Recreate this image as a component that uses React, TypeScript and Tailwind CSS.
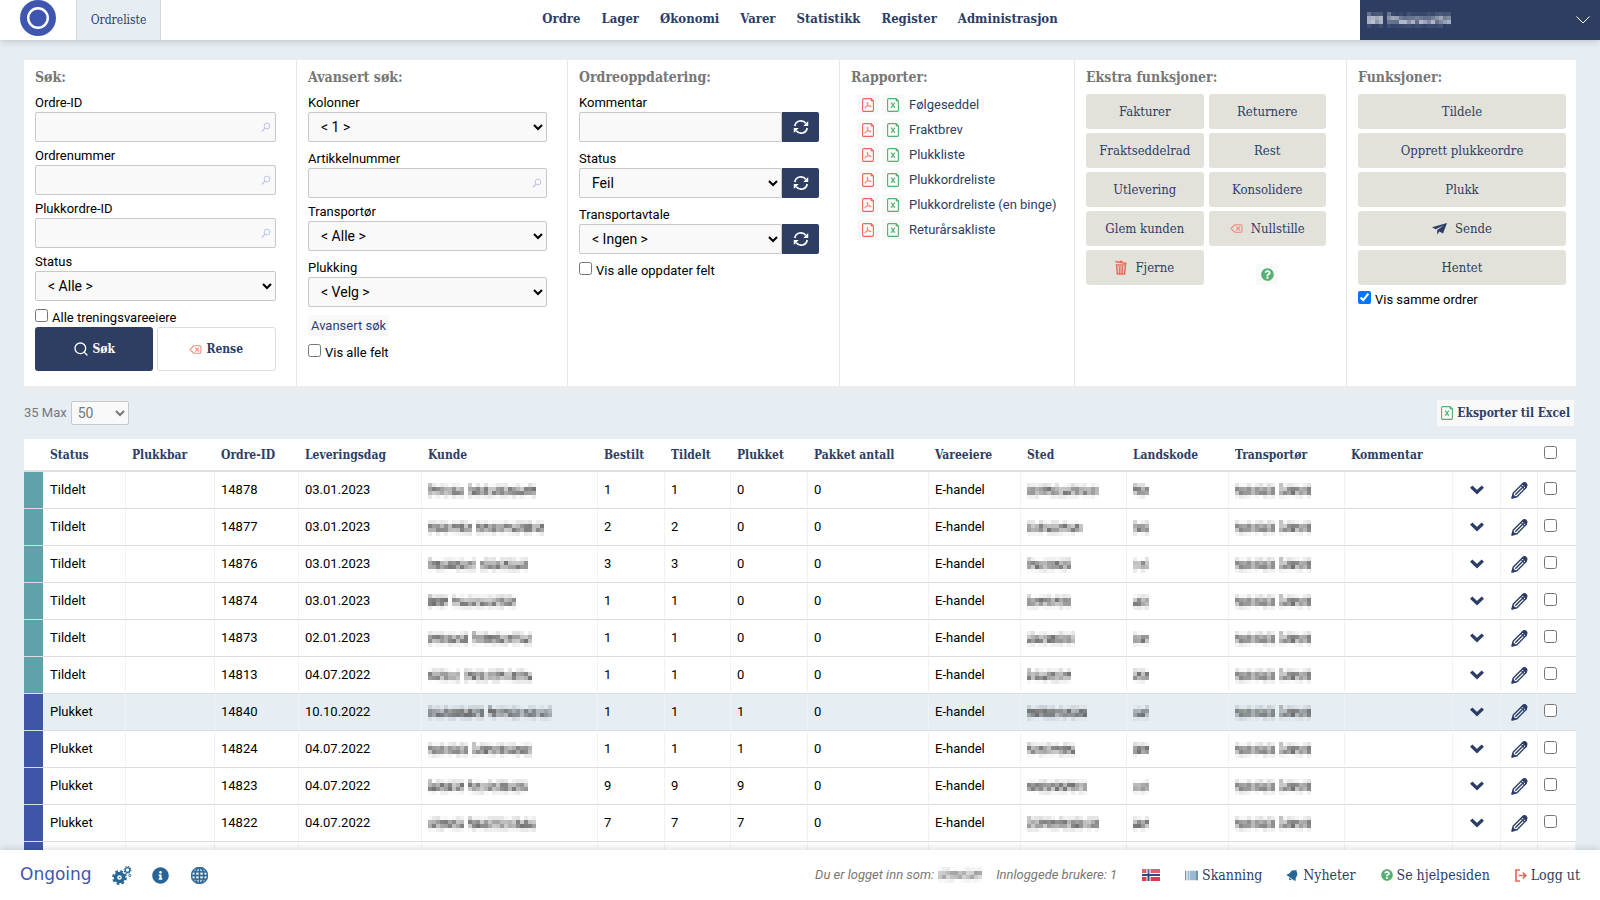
import type { ReactNode } from "react";
import { Delete, Search } from "lucide-react";
import { FaBarcode, FaBell, FaInfoCircle, FaQuestionCircle } from "react-icons/fa";
import { BsGlobe } from "react-icons/bs";

const slab = "font-['DejaVu_Serif_Condensed','DejaVu_Serif',serif]";

const menu = ["Ordre", "Lager", "Økonomi", "Varer", "Statistikk", "Register", "Administrasjon"];

const reports = [
  "Følgeseddel",
  "Fraktbrev",
  "Plukkliste",
  "Plukkordreliste",
  "Plukkordreliste (en binge)",
  "Returårsakliste",
];

const columns = [
  { label: "", width: 20 },
  { label: "Status", width: 82 },
  { label: "Plukkbar", width: 89 },
  { label: "Ordre-ID", width: 84 },
  { label: "Leveringsdag", width: 123 },
  { label: "Kunde", width: 176 },
  { label: "Bestilt", width: 67 },
  { label: "Tildelt", width: 66 },
  { label: "Plukket", width: 77 },
  { label: "Pakket antall", width: 121 },
  { label: "Vareeiere", width: 92 },
  { label: "Sted", width: 106 },
  { label: "Landskode", width: 102 },
  { label: "Transportør", width: 116 },
  { label: "Kommentar", width: 108 },
  { label: "", width: 48 },
  { label: "", width: 37 },
  { label: "", width: 38 },
];

// kunde and sted hold the lengths of the masked words, in mosaic cells
const orders = [
  { id: "14878", status: "Tildelt", date: "03.01.2023", ordered: 1, allocated: 1, picked: 0, kunde: [9, 17], sted: [18] },
  { id: "14877", status: "Tildelt", date: "03.01.2023", ordered: 2, allocated: 2, picked: 0, kunde: [11, 17], sted: [14] },
  { id: "14876", status: "Tildelt", date: "03.01.2023", ordered: 3, allocated: 3, picked: 0, kunde: [12, 12], sted: [11] },
  { id: "14874", status: "Tildelt", date: "03.01.2023", ordered: 1, allocated: 1, picked: 0, kunde: [5, 16], sted: [11] },
  { id: "14873", status: "Tildelt", date: "02.01.2023", ordered: 1, allocated: 1, picked: 0, kunde: [10, 15], sted: [12] },
  { id: "14813", status: "Tildelt", date: "04.07.2022", ordered: 1, allocated: 1, picked: 0, kunde: [8, 17], sted: [11] },
  { id: "14840", status: "Plukket", date: "10.10.2022", ordered: 1, allocated: 1, picked: 1, kunde: [14, 16], sted: [15] },
  { id: "14824", status: "Plukket", date: "04.07.2022", ordered: 1, allocated: 1, picked: 1, kunde: [10, 15], sted: [12] },
  { id: "14823", status: "Plukket", date: "04.07.2022", ordered: 9, allocated: 9, picked: 9, kunde: [9, 15], sted: [15] },
  { id: "14822", status: "Plukket", date: "04.07.2022", ordered: 7, allocated: 7, picked: 7, kunde: [9, 17], sted: [18] },
];

function Masked({ words, seed, color = "#3a3a3a" }: { words: number[]; seed: number; color?: string }) {
  const cells: ReactNode[] = [];
  let x = 0;
  words.forEach((len, w) => {
    for (let i = 0; i < len; i++) {
      for (let row = 0; row < 4; row++) {
        const noise = Math.abs(Math.sin((seed + 1) * 12.9 + (x + i) * 78.2 + row * 37.7) * 43758.5) % 1;
        const strength = row === 0 ? (i === 0 ? 0.4 : 0.16) : row === 3 ? 0.12 : 0.45;
        const base = row === 1 || row === 2 ? 0.26 : 0;
        cells.push(
          <rect key={`${w}-${i}-${row}`} x={(x + i) * 4} y={row * 4} width={4} height={4} fill={color} opacity={base + noise * strength} />
        );
      }
    }
    x += len + 1;
  });
  const width = (x - 1) * 4;
  return (
    <svg width={width} height={16} viewBox={`0 0 ${width} 16`} className="inline-block shrink-0 align-middle" shapeRendering="crispEdges" aria-hidden="true">
      {cells}
    </svg>
  );
}

function PdfIcon() {
  return (
    <svg width="12" height="14" viewBox="0 0 12 14" fill="none" stroke="#f0655a" aria-hidden="true">
      <path d="M1.8.6H9l2.4 2.4v9.2a1.2 1.2 0 0 1-1.2 1.2H1.8A1.2 1.2 0 0 1 .6 12.2V1.8A1.2 1.2 0 0 1 1.8.6Z" strokeWidth="1.1" />
      <path d="M9 .6V3h2.4Z" fill="#f0655a" strokeWidth=".6" />
      <path d="M5.3 4.2c1 0 .5 2-.2 3.4C4.4 9 3.5 10.3 2.900 10c-.8-.5 1.2-1.7 3-2 1.6-.3 3.3-.2 3.3.4 0 .7-1.7.2-2.800-1-1-1.1-1.7-3.2-1.100-3.2Z" strokeWidth=".7" />
    </svg>
  );
}

function ExcelIcon() {
  return (
    <svg width="12" height="14" viewBox="0 0 12 14" fill="none" stroke="#55b071" aria-hidden="true">
      <path d="M1.8.6H9l2.4 2.4v9.2a1.2 1.2 0 0 1-1.2 1.2H1.8A1.2 1.2 0 0 1 .6 12.2V1.8A1.2 1.2 0 0 1 1.8.6Z" strokeWidth="1.1" />
      <path d="M9 .6V3h2.4Z" fill="#55b071" strokeWidth=".6" />
      <path d="m4.4 5 3.200 4.400M7.600 5 4.400 9.400" strokeWidth="1.200" />
      <path d="M3.800 5h1.400M6.800 5h1.400M3.800 9.400h1.400M6.800 9.400h1.400" strokeWidth=".7" />
    </svg>
  );
}

function LookupIcon() {
  return (
    <svg width="10" height="10" viewBox="0 0 10 10" fill="none" stroke="#bcc6e0" className="absolute top-[10px] right-[5px]" aria-hidden="true">
      <circle cx="6" cy="4" r="2.900" />
      <path d="M4 6.200.8 9.400" strokeWidth="1.300" />
    </svg>
  );
}

function SyncIcon() {
  return (
    <svg width="16" height="16" viewBox="0 0 16 16" fill="none" stroke="#fff" strokeWidth="1.700" aria-hidden="true">
      <path d="M1.800 7A6.200 6.200 0 0 1 12.800 4.200M14.200 9A6.200 6.200 0 0 1 3.200 11.800" />
      <path d="M15.200 2v5h-5ZM.8 14V9h5Z" fill="#fff" stroke="none" />
    </svg>
  );
}

function TrashIcon() {
  return (
    <svg width="12" height="15" viewBox="0 0 12 15" fill="none" stroke="#f0655a" aria-hidden="true">
      <path d="M.4 1.500 11.600 3.500M5 1.200l2.600.5M.8 4.800h10.400" strokeWidth="1.300" />
      <path d="m1.600 5 .8 9h7.200l.8-9" strokeWidth="1.500" />
      <path d="m4.200 5.500.3 8M6 5.500v8M7.800 5.500l-.3 8" strokeWidth="1.100" />
    </svg>
  );
}

function PlaneIcon() {
  return (
    <svg width="15" height="12" viewBox="0 0 15 12" fill="#2d3e66" aria-hidden="true">
      <path d="M15 0 0 4.200l3.600 2L12 2.200 5.200 7v4.600L7.400 8.600l3.600 2Z" />
    </svg>
  );
}

function ExpandIcon() {
  return (
    <svg width="14" height="10" viewBox="0 0 14 10" fill="none" stroke="#2d3e66" strokeWidth="3.400" aria-hidden="true">
      <path d="m1.200 1.600 5.800 5.600 5.800-5.600" />
    </svg>
  );
}

function PencilIcon() {
  return (
    <svg width="17" height="17" viewBox="0 0 17 17" fill="none" stroke="#2d3e66" aria-hidden="true">
      <path d="M1 16 2.300 11 11.600 1.800 15.200 5.400 6 14.700Z" strokeWidth="1.400" strokeLinejoin="round" />
      <path d="M11.800 1.600c1.200-1.200 2.200-1.200 3.200-.2s1.200 2 .2 3.400Z" fill="#2d3e66" strokeWidth="1.400" />
      <path d="m4.300 12.700 8.500-8.500" strokeWidth="1.500" />
      <path d="m10 3.400 3.600 3.600" strokeWidth="1.100" />
      <path d="M1 16l1-3.400 2.400 2.400Z" fill="#2d3e66" />
    </svg>
  );
}

function GearsIcon() {
  return (
    <svg width="20" height="19" viewBox="0 0 20 19" fill="none" stroke="#276596" aria-hidden="true">
      <circle cx="7.500" cy="11.500" r="4" strokeWidth="3.400" />
      <circle cx="7.500" cy="11.500" r="6.300" strokeWidth="2.200" strokeDasharray="2.600 2.350" />
      <circle cx="7.500" cy="11.500" r=".8" fill="#276596" stroke="none" />
      <circle cx="15.500" cy="4" r="2.300" strokeWidth="1.300" />
      <circle cx="15.500" cy="4" r="3.400" strokeWidth="1.100" strokeDasharray="1.400 1.270" />
      <circle cx="17.800" cy="9.400" r="1.100" strokeWidth=".9" />
    </svg>
  );
}

function LogoutIcon() {
  return (
    <svg width="12" height="13" viewBox="0 0 12 13" fill="none" stroke="#f0655a" strokeWidth="1.700" aria-hidden="true">
      <path d="M5 1H1v11h4M3.600 6.500h7M7.800 3.500l3 3-3 3" />
    </svg>
  );
}

function NorwayFlag() {
  return (
    <svg width="18" height="12" viewBox="0 0 18 12" role="img" aria-label="Norsk">
      <rect width="18" height="12" fill="#de3c4b" />
      <path d="M0 6h18M6.500 0v12" stroke="#fff" strokeWidth="4" />
      <path d="M0 6h18M6.500 0v12" stroke="#2e4a86" strokeWidth="2" />
      <rect width="18" height="5" fill="#fff" opacity=".18" />
    </svg>
  );
}

const fieldBox = "h-[30px] w-full rounded-[2px] border border-[#c8c8c8] bg-[#f9f9f9] text-sm text-black";
const fieldLabel = "block h-[18px] leading-[18px]";

function TextField({ id, label }: { id: string; label: string }) {
  return (
    <div className="mb-[5px]">
      <label htmlFor={id} className={fieldLabel}>{label}</label>
      <div className="relative">
        <input id={id} type="text" className={`${fieldBox} pr-6 pl-2`} />
        <LookupIcon />
      </div>
    </div>
  );
}

function SelectField({ id, label, value }: { id: string; label: string; value: string }) {
  return (
    <div className="mb-2">
      <label htmlFor={id} className={fieldLabel}>{label}</label>
      <select id={id} className={`${fieldBox} pl-2`}>
        <option>{value}</option>
      </select>
    </div>
  );
}

function UpdateField({ id, label, value }: { id: string; label: string; value?: string }) {
  return (
    <div className="mb-2">
      <label htmlFor={id} className={fieldLabel}>{label}</label>
      <div className="flex">
        {value ? (
          <select id={id} className={`${fieldBox} min-w-0 flex-1 pl-2`}>
            <option>{value}</option>
          </select>
        ) : (
          <input id={id} type="text" className={`${fieldBox} min-w-0 flex-1 px-2`} />
        )}
        <button type="button" aria-label={`Oppdater ${label.toLowerCase()}`} className="flex h-[30px] w-[37px] shrink-0 items-center justify-center rounded-r-[2px] bg-[#2d3e62]">
          <SyncIcon />
        </button>
      </div>
    </div>
  );
}

function Check({ id, label, checked }: { id: string; label: string; checked?: boolean }) {
  return (
    <div className="flex h-[18px] items-start gap-1">
      <input id={id} type="checkbox" defaultChecked={checked} className="size-[13px]" />
      <label htmlFor={id} className="leading-[18px]">{label}</label>
    </div>
  );
}

function Panel({ title, children, last }: { title: string; children: ReactNode; last?: boolean }) {
  return (
    <section className={last ? "min-w-0 pt-2 pr-[10px] pl-[11px]" : "min-w-0 border-r border-[#e8e8e8] pt-2 pr-5 pl-[11px]"}>
      <h2 className={`${slab} h-[26px] text-sm leading-[18px] font-bold whitespace-nowrap text-[#777]`}>{title}</h2>
      {children}
    </section>
  );
}

function FnButton({ children }: { children: ReactNode }) {
  return (
    <button type="button" className={`${slab} flex h-[35px] w-full items-center justify-center gap-2 rounded-[3px] bg-[#e2e2da] text-[13px] whitespace-nowrap text-[#2d3e66]`}>
      {children}
    </button>
  );
}

function Header() {
  return (
    <header className="relative z-10 flex h-10 shrink-0 bg-white shadow-[0_1px_8px_rgba(0,0,0,0.2)]">
      <div className="flex flex-1">
        <a href="#" aria-label="Ongoing" className="ml-5">
          <svg width="36" height="36" viewBox="0 0 36 36">
            <circle cx="18" cy="18" r="18" fill="#3f56b0" />
            <circle cx="18" cy="18" r="9.800" fill="none" stroke="#fff" strokeWidth="2.400" />
          </svg>
        </a>
        <a href="#" className={`${slab} ml-5 flex w-[85px] items-center justify-center border-x border-[#d4d9de] bg-[#e6eef4] text-xs text-[#2d3e66]`}>
          Ordreliste
        </a>
      </div>
      <nav className={`${slab} flex items-center gap-[21px] pb-0.5 text-[13px] font-bold text-[#2d3e66]`}>
        {menu.map((m) => (
          <a key={m} href="#">{m}</a>
        ))}
      </nav>
      <div className="flex flex-1 justify-end">
        <div className="relative w-60 bg-[#2d3e62]">
          <select aria-label="Vareeier" className="h-full w-full appearance-none bg-transparent" />
          <div className="pointer-events-none absolute inset-0 flex items-center justify-between pr-[10px] pl-[7px]">
            <Masked words={[4, 16]} seed={3} color="#f4f6fa" />
            <svg width="14" height="8" viewBox="0 0 14 8" fill="none" stroke="#fff">
              <path d="m.5.5 6.500 6.500L13.500.5" />
            </svg>
          </div>
        </div>
      </div>
    </header>
  );
}

function SearchPanels() {
  return (
    <div className="grid min-h-[326px] grid-cols-[273fr_271fr_272fr_235fr_272fr_229fr] bg-white text-[13px] shadow-[0_6px_0_#ececec]">
      <Panel title="Søk:">
        <TextField id="ordre-id" label="Ordre-ID" />
        <TextField id="ordrenummer" label="Ordrenummer" />
        <TextField id="plukkordre-id" label="Plukkordre-ID" />
        <SelectField id="sok-status" label="Status" value="< Alle >" />
        <Check id="trening" label="Alle treningsvareeiere" />
        <div className={`${slab} flex gap-1 text-xs font-bold`}>
          <button type="button" className="flex h-11 flex-1 items-center justify-center gap-1 rounded-[3px] bg-[#2d3e62] text-white">
            <Search className="size-4" />
            Søk
          </button>
          <button type="button" className="flex h-11 flex-1 items-center justify-center gap-1 rounded-[3px] border border-[#ddd] text-[#2d3e66]">
            <Delete className="size-[13px] text-[#f5877e]" />
            Rense
          </button>
        </div>
      </Panel>

      <Panel title="Avansert søk:">
        <SelectField id="kolonner" label="Kolonner" value="< 1 >" />
        <TextField id="artikkelnummer" label="Artikkelnummer" />
        <SelectField id="transportor" label="Transportør" value="< Alle >" />
        <SelectField id="plukking" label="Plukking" value="< Velg >" />
        <button type="button" className="mb-2 block h-[21px] bg-[#f9f9f9] px-[3px] text-[#2d3e77]">Avansert søk</button>
        <Check id="alle-felt" label="Vis alle felt" />
      </Panel>

      <Panel title="Ordreoppdatering:">
        <UpdateField id="kommentar" label="Kommentar" />
        <UpdateField id="ny-status" label="Status" value="Feil" />
        <UpdateField id="transportavtale" label="Transportavtale" value="< Ingen >" />
        <Check id="oppdater-felt" label="Vis alle oppdater felt" />
      </Panel>

      <Panel title="Rapporter:">
        <ul>
          {reports.map((r) => (
            <li key={r} className="mb-1 flex h-[21px] items-center gap-[3px] pl-1.5">
              <button type="button" aria-label={`${r} PDF`} className="flex h-[21px] w-[22px] shrink-0 items-center justify-center bg-[#f9f9f9]">
                <PdfIcon />
              </button>
              <button type="button" aria-label={`${r} Excel`} className="flex h-[21px] w-[22px] shrink-0 items-center justify-center bg-[#f9f9f9]">
                <ExcelIcon />
              </button>
              <a href="#" className="pl-0.5 whitespace-nowrap text-[#2d3e66]">{r}</a>
            </li>
          ))}
        </ul>
      </Panel>

      <Panel title="Ekstra funksjoner:">
        <div className="grid grid-cols-2 gap-x-[5px] gap-y-1">
          <FnButton>Fakturer</FnButton>
          <FnButton>Returnere</FnButton>
          <FnButton>Fraktseddelrad</FnButton>
          <FnButton>Rest</FnButton>
          <FnButton>Utlevering</FnButton>
          <FnButton>Konsolidere</FnButton>
          <FnButton>Glem kunden</FnButton>
          <FnButton>
            <Delete className="size-[13px] text-[#f5877e]" />
            Nullstille
          </FnButton>
          <FnButton>
            <TrashIcon />
            Fjerne
          </FnButton>
          <div className="flex items-end justify-center">
            <button type="button" aria-label="Hjelp" className="flex h-[21px] w-[22px] items-center justify-center bg-[#f9f9f9] text-[#55b071]">
              <FaQuestionCircle className="size-[13px]" />
            </button>
          </div>
        </div>
      </Panel>

      <Panel title="Funksjoner:" last>
        <div className="mb-1.5 flex flex-col gap-1">
          <FnButton>Tildele</FnButton>
          <FnButton>Opprett plukkeordre</FnButton>
          <FnButton>Plukk</FnButton>
          <FnButton>
            <PlaneIcon />
            Sende
          </FnButton>
          <FnButton>Hentet</FnButton>
        </div>
        <Check id="samme-ordrer" label="Vis samme ordrer" checked />
      </Panel>
    </div>
  );
}

const cell = "border-r border-[#f2f2f2] pl-1.5 text-left";

function OrderTable() {
  return (
    <table className="w-full table-fixed border-separate border-spacing-0 bg-white text-[13px] text-black">
      <colgroup>
        {columns.map((c, i) => (
          <col key={i} style={{ width: c.width }} />
        ))}
      </colgroup>
      <thead className={`${slab} text-xs text-[#2d3e66]`}>
        <tr className="h-[33px]">
          {columns.map((c, i) => (
            <th key={i} className="border-b-2 border-[#dfe0e1] pl-1.5 text-left font-bold whitespace-nowrap">
              {i === columns.length - 1 ? <input type="checkbox" aria-label="Velg alle" className="mb-1 block size-[13px]" /> : c.label}
            </th>
          ))}
        </tr>
      </thead>
      <tbody className="[&_td]:border-b [&_td]:border-b-[#dcdddf]">
        {orders.map((o, i) => (
          <tr key={o.id} className={o.id === "14840" ? "h-[37px] bg-[#e6eef4]" : "h-[37px]"}>
            <td className="p-0">
              <div className={o.status === "Tildelt" ? "h-9 w-[19px] bg-[#5fa3aa]" : "h-9 w-[19px] bg-[#3f56a8]"} />
            </td>
            <td className={cell}>{o.status}</td>
            <td className={cell} />
            <td className={cell}>{o.id}</td>
            <td className={cell}>{o.date}</td>
            <td className={cell}><Masked words={o.kunde} seed={i} /></td>
            <td className={cell}>{o.ordered}</td>
            <td className={cell}>{o.allocated}</td>
            <td className={cell}>{o.picked}</td>
            <td className={cell}>0</td>
            <td className={cell}>E-handel</td>
            <td className={cell}><Masked words={o.sted} seed={i + 20} /></td>
            <td className={cell}><Masked words={[4]} seed={i + 40} /></td>
            <td className={cell}><Masked words={[10, 8]} seed={7} /></td>
            <td className={cell} />
            <td className="border-r border-[#f2f2f2]">
              <button type="button" aria-label="Vis linjer" className="mx-auto block"><ExpandIcon /></button>
            </td>
            <td className="border-r border-[#f2f2f2]">
              <button type="button" aria-label="Rediger" className="mx-auto block"><PencilIcon /></button>
            </td>
            <td className="pl-1.5"><input type="checkbox" aria-label={`Velg ${o.id}`} className="mb-[3px] block size-[13px]" /></td>
          </tr>
        ))}
        <tr className="h-[37px]">
          <td className="p-0">
            <div className="h-9 w-[19px] bg-[#3f56a8]" />
          </td>
          {columns.slice(1).map((_, i) => (
            <td key={i} className={cell} />
          ))}
        </tr>
      </tbody>
    </table>
  );
}

function FooterLink({ icon, children }: { icon: ReactNode; children: ReactNode }) {
  return (
    <a href="#" className={`${slab} flex items-center gap-1 text-sm text-[#2d3e66]`}>
      {icon}
      {children}
    </a>
  );
}

function Footer() {
  return (
    <footer className="relative z-10 flex h-[50px] shrink-0 items-center justify-between bg-white px-5 shadow-[0_-1px_8px_rgba(0,0,0,0.15)]">
      <div className="flex items-center text-[#276596]">
        <span className="mr-5 font-['DejaVu_Sans',sans-serif] text-[17px] text-[#3f56b0]">Ongoing</span>
        <button type="button" aria-label="Innstillinger" className="mr-5"><GearsIcon /></button>
        <button type="button" aria-label="Informasjon" className="mr-[22px]"><FaInfoCircle className="size-[17px]" /></button>
        <button type="button" aria-label="Språk"><BsGlobe className="size-[17px]" strokeWidth={0.6} /></button>
      </div>
      <div className="flex items-center gap-[25px]">
        <div className="flex items-center gap-3.5 text-[13px] text-[#777] italic">
          <span className="flex items-center gap-1">
            Du er logget inn som: <Masked words={[11]} seed={9} color="#777777" />
          </span>
          <span>Innloggede brukere: 1</span>
        </div>
        <NorwayFlag />
        <FooterLink icon={<FaBarcode className="size-[13px] text-[#276596]" />}>Skanning</FooterLink>
        <FooterLink icon={<FaBell className="size-3 rotate-[35deg] text-[#276596]" />}>Nyheter</FooterLink>
        <FooterLink icon={<FaQuestionCircle className="size-3 text-[#55b071]" />}>Se hjelpesiden</FooterLink>
        <FooterLink icon={<LogoutIcon />}>Logg ut</FooterLink>
      </div>
    </footer>
  );
}

export default function App() {
  return (
    <div className="flex h-screen flex-col bg-[#e6eef4] font-[Roboto,sans-serif] text-black">
      <Header />
      <main className="min-h-0 flex-1 overflow-y-auto px-6 pt-5 [scrollbar-width:none]">
        <SearchPanels />
        <div className="flex h-[53px] items-center justify-between">
          <div className="flex items-center gap-1 text-[13px] text-[#777]">
            <label htmlFor="max">35 Max</label>
            <select id="max" className="h-6 w-[58px] rounded-[2px] border border-[#c8c8c8] bg-[#f9f9f9] pl-0.5 text-sm">
              <option>50</option>
            </select>
          </div>
          <button type="button" className={`${slab} mr-0.5 flex h-[26px] items-center gap-1 bg-[#f9f9f9] px-1 text-xs font-bold text-[#2d3e66]`}>
            <ExcelIcon />
            Eksporter til Excel
          </button>
        </div>
        <OrderTable />
      </main>
      <Footer />
    </div>
  );
}
